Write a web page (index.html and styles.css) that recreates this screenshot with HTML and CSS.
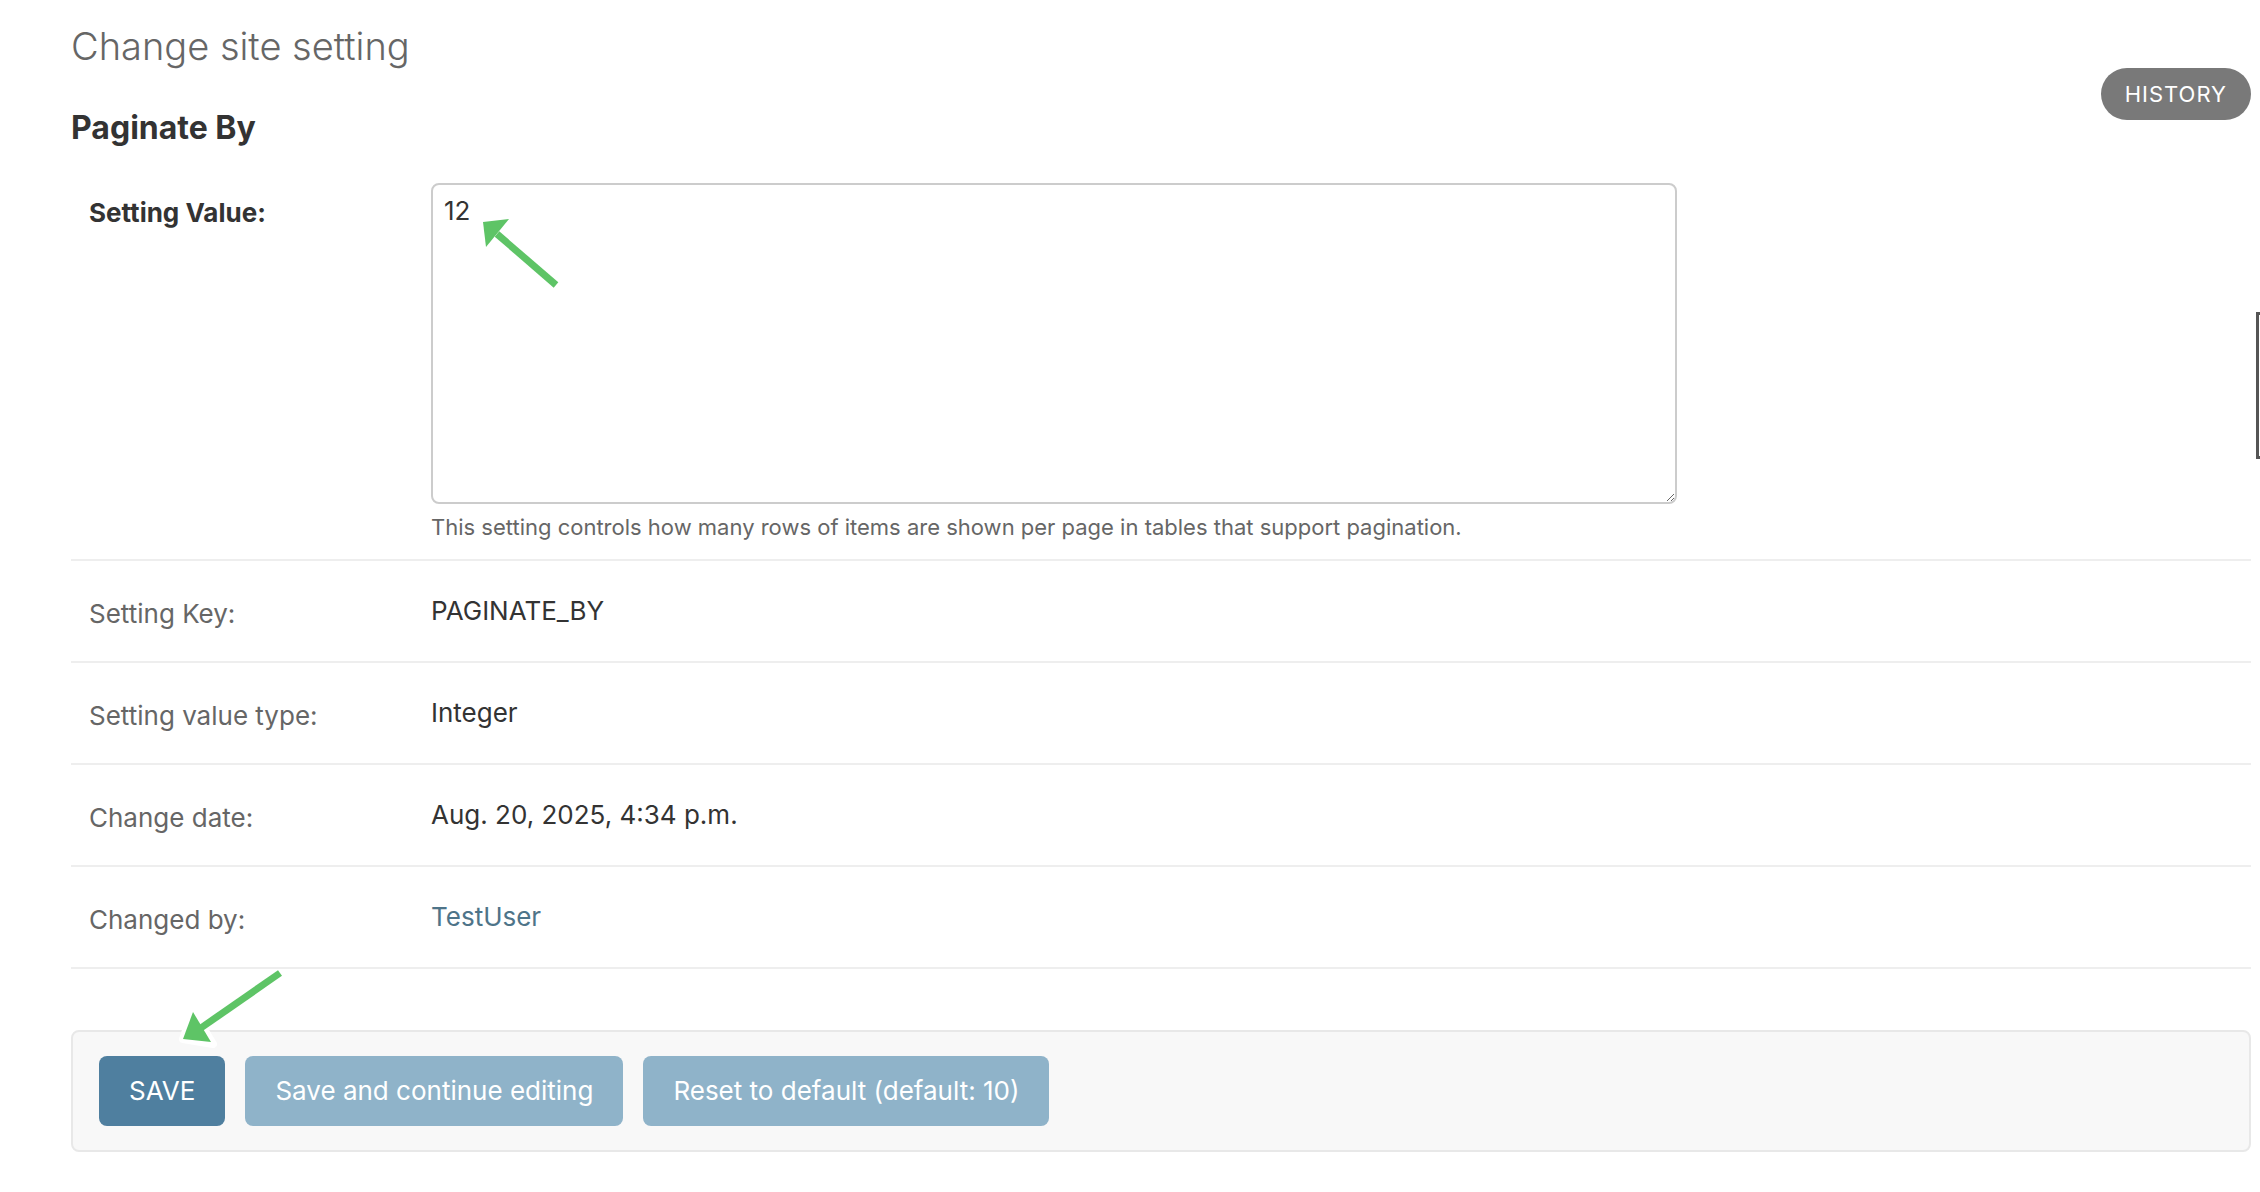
FILE: index.html
```html
<!DOCTYPE html>
<html lang="en">
<head>
<meta charset="utf-8">
<title>Change site setting</title>
<link rel="stylesheet" href="styles.css">
</head>
<body>
<div class="page">
  <h1 class="title">Change site setting</h1>
  <ul class="object-tools"><li><a class="history" href="#">History</a></li></ul>
  <h2 class="setting-name">Paginate By</h2>
  <form class="form">
    <div class="form-row">
      <label class="label label-strong" for="value">Setting Value:</label>
      <div class="field">
        <textarea id="value" class="textarea">12</textarea>
        <div class="help">This setting controls how many rows of items are shown per page in tables that support pagination.</div>
      </div>
    </div>
    <div class="form-row">
      <div class="label">Setting Key:</div>
      <div class="readonly">PAGINATE_BY</div>
    </div>
    <div class="form-row">
      <div class="label">Setting value type:</div>
      <div class="readonly">Integer</div>
    </div>
    <div class="form-row">
      <div class="label">Change date:</div>
      <div class="readonly">Aug. 20, 2025, 4:34 p.m.</div>
    </div>
    <div class="form-row">
      <div class="label">Changed by:</div>
      <div class="readonly"><a class="link" href="#">TestUser</a></div>
    </div>
    <div class="submit-row">
      <button type="button" class="btn btn-default">SAVE</button>
      <button type="button" class="btn">Save and continue editing</button>
      <button type="button" class="btn">Reset to default (default: 10)</button>
    </div>
  </form>
</div>
<div class="edge-tab"></div>
<svg class="annotations" width="2260" height="1192" viewBox="0 0 2260 1192" aria-hidden="true">
  <line x1="556" y1="285" x2="497" y2="234" stroke="#5ec466" stroke-width="7" />
  <polygon points="483,222 509,219 486,247" fill="#5ec466" />
  <polygon points="183,1039 193,1011 213,1044" fill="#ffffff" stroke="#ffffff" stroke-width="8" stroke-linejoin="round" />
  <line x1="280" y1="973" x2="198" y2="1030" stroke="#5ec466" stroke-width="7" />
  <polygon points="183,1039 193,1012 211,1042" fill="#5ec466" />
</svg>
</body>
</html>
```
FILE: styles.css
```css
* { box-sizing: border-box; }

html, body {
  margin: 0;
  padding: 0;
  background: #ffffff;
}

body {
  font-family: Inter, "Noto Sans", "Liberation Sans", sans-serif;
  color: #333333;
  font-size: 26px;
  position: relative;
  width: 2260px;
  height: 1192px;
  overflow: hidden;
}

.page {
  padding: 22px 9px 0 71px;
}

.title {
  margin: 0;
  font-size: 38px;
  line-height: 48px;
  font-weight: 300;
  color: #666666;
}

.object-tools {
  float: right;
  list-style: none;
  margin: -2px 0 0 0;
  padding: 0;
}

.history {
  display: block;
  padding: 6px 24px;
  line-height: 40px;
  font-size: 22px;
  letter-spacing: 1px;
  text-transform: uppercase;
  color: #ffffff;
  background: #797979;
  border-radius: 30px;
  text-decoration: none;
}

.setting-name {
  margin: 38px 0 0 0;
  font-size: 32px;
  line-height: 40px;
  font-weight: 700;
  color: #333333;
}

.form {
  clear: both;
  margin-top: 35px;
}

.form-row {
  display: flex;
  align-items: flex-start;
  padding: 20px 18px;
  border-bottom: 2px solid #eeeeee;
  min-height: 102px;
}

.form-row:first-child {
  padding-top: 0;
  padding-bottom: 17px;
}

.label {
  flex: 0 0 342px;
  padding-top: 16px;
  line-height: 34px;
  font-size: 26px;
  color: #666666;
}

.label-strong {
  font-weight: 700;
  color: #333333;
  padding-top: 13px;
}

.field {
  display: flex;
  flex-direction: column;
}

.textarea {
  display: block;
  width: 1246px;
  height: 321px;
  padding: 9px 11px;
  border: 2px solid #cccccc;
  border-radius: 8px;
  font-family: inherit;
  font-size: 26px;
  line-height: 34px;
  color: #333333;
  background: #ffffff;
  resize: vertical;
}

.help {
  margin-top: 8px;
  font-size: 22px;
  line-height: 30px;
  color: #666666;
}

.readonly {
  padding-top: 13px;
  line-height: 34px;
  font-size: 26px;
  color: #333333;
}

.link {
  color: #4e7489;
  text-decoration: none;
}

.submit-row {
  display: flex;
  gap: 20px;
  margin-top: 61px;
  padding: 24px 26px;
  background: #f8f8f8;
  border: 2px solid #e8e8e8;
  border-radius: 8px;
}

.btn {
  padding: 20px 30px;
  border: 0;
  border-radius: 8px;
  font-family: inherit;
  font-size: 26px;
  line-height: 30px;
  color: #ffffff;
  background: #8fb3c9;
  cursor: pointer;
}

.btn-default {
  background: #4f7f9f;
}

.edge-tab {
  position: absolute;
  left: 2256px;
  top: 312px;
  width: 20px;
  height: 147px;
  border: 3px solid #555555;
}

.annotations {
  position: absolute;
  left: 0;
  top: 0;
  pointer-events: none;
}
```
